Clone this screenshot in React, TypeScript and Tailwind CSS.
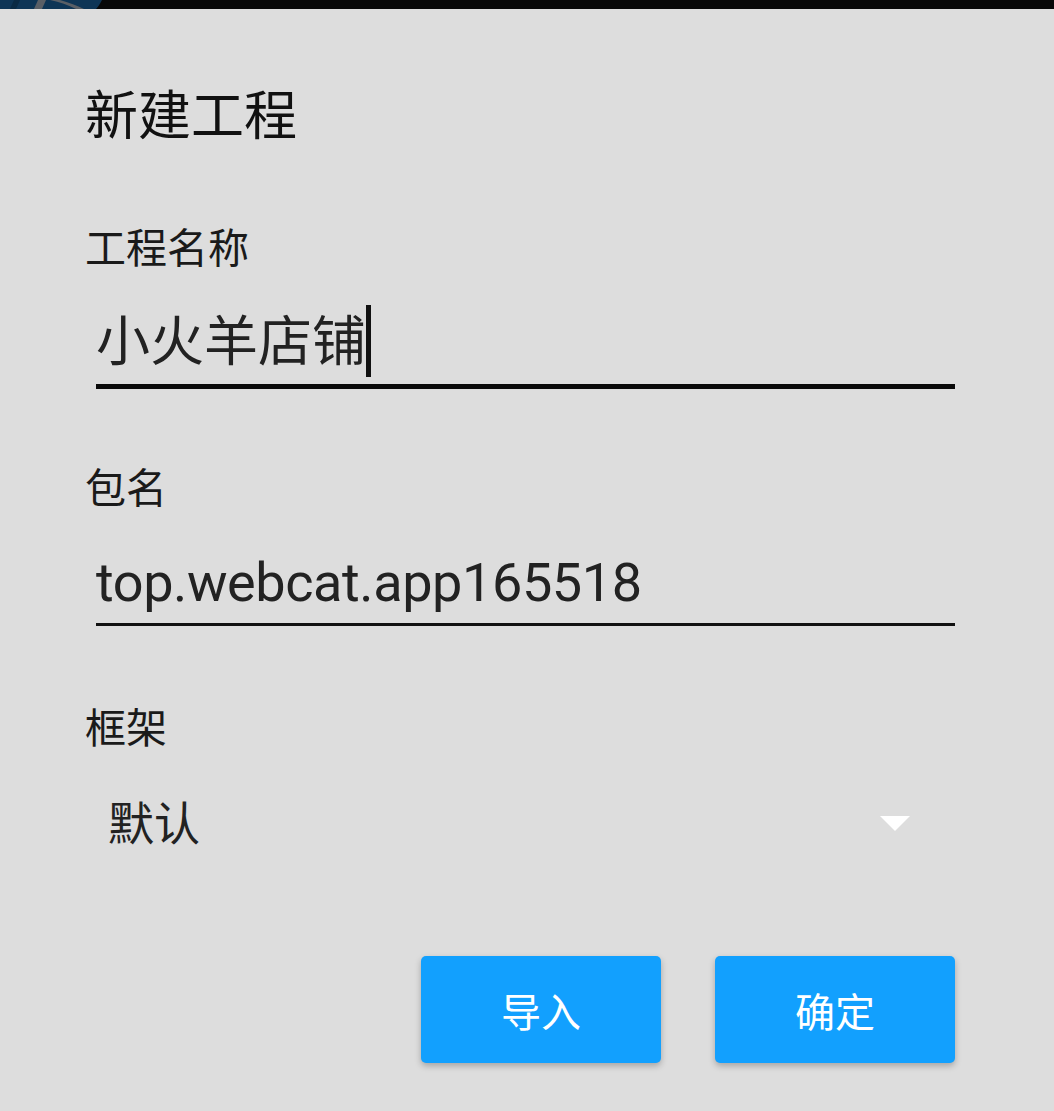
import React from 'react';

const cjk = { fontFamily: '"Noto Sans CJK SC", "Noto Sans", sans-serif' };
const latin = { fontFamily: 'Roboto, "Noto Sans CJK SC", sans-serif' };

function TopStrip() {
  return (
    <div className="relative h-[9px] w-full shrink-0 overflow-hidden bg-[#080808]">
      <svg className="absolute left-0 top-0" width="110" height="9" viewBox="0 0 110 9">
        <path d="M0 0 L102 0 C100 4 98 7 96 9 L0 9 Z" fill="#0e3556" />
        <path d="M10 9 L14 0 L20 0 L16 9 Z" fill="#0a2a44" />
        <path d="M34 9 L38 0 L46 0 L42 9 Z" fill="#5a5f66" />
        <path d="M50 0 L60 0 C70 3 78 6 84 9 L76 9 C68 5 60 2 50 0 Z" fill="#5a5f66" />
      </svg>
    </div>
  );
}

function Field({ label, children, labelTop }: { label: string; children: React.ReactNode; labelTop: string }) {
  return (
    <>
      <div className={`${labelTop} h-[41px] text-[41px] leading-none text-[#1a1a1a]`} style={cjk}>
        {label}
      </div>
      {children}
    </>
  );
}

export default function App() {
  return (
    <div className="flex h-[1111px] w-full flex-col bg-[#dddddd]">
      <TopStrip />
      <div className="flex flex-col pl-[85px]">
        <h1 className="mt-[77px] h-[53px] text-[53px] font-normal leading-none text-[#111111]" style={cjk}>
          新建工程
        </h1>

        <Field label="工程名称" labelTop="mt-[86px]">
          <div className="mt-[39px] ml-[11px] w-[859px]">
            <div className="flex h-[79px] items-start">
              <span className="mt-[5.5px] h-[54px] text-[54px] leading-none text-[#222222]" style={cjk}>
                小火羊店铺
              </span>
              <span className="ml-[0px] h-[72px] w-[5px] bg-[#111111]" />
            </div>
            <div className="h-[5px] w-full bg-[#0a0a0a]" />
          </div>
        </Field>

        <Field label="包名" labelTop="mt-[76px]">
          <div className="mt-[50px] ml-[11px] w-[859px]">
            <div className="h-[54px] text-[54px] leading-none tracking-[-0.4px] text-[#222222]" style={latin}>
              top.webcat.app165518
            </div>
            <div className="mt-[13px] h-[3px] w-full bg-[#111111]" />
          </div>
        </Field>

        <Field label="框架" labelTop="mt-[79px]">
          <div className="mt-[50.5px] ml-[11px] flex w-[859px] items-center justify-between">
            <span className="ml-[12px] h-[46px] text-[46px] leading-none text-[#222222]" style={cjk}>
              默认
            </span>
            <svg className="mr-[45px] mt-[8px]" width="30" height="15" viewBox="0 0 30 15">
              <path d="M0 0 L30 0 L15 15 Z" fill="#ffffff" />
            </svg>
          </div>
        </Field>

        <div className="mt-[113.5px] flex justify-end gap-[54px] pr-[99px]">
          {['导入', '确定'].map((t) => (
            <button
              key={t}
              className="flex h-[107px] w-[240px] items-center justify-center rounded-[5px] bg-[#12a0fe] text-[40px] leading-none text-white shadow-[0_3px_6px_rgba(0,0,0,0.25)]"
              style={cjk}
            >
              {t}
            </button>
          ))}
        </div>
      </div>
    </div>
  );
}
